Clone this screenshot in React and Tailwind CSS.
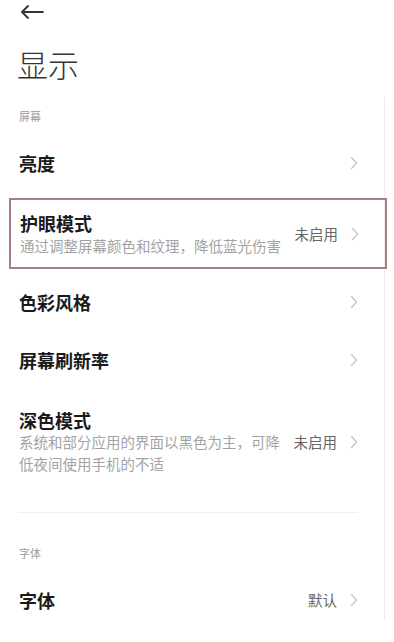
import React from "react";

const FONT = { fontFamily: '"Noto Sans CJK SC", "Noto Sans", sans-serif' };

const Chevron = () => (
  <svg width="8" height="14" viewBox="0 0 8 14" fill="none" className="shrink-0">
    <polyline points="1.5,1.5 6.5,7 1.5,12.5" stroke="#c4c4c4" strokeWidth="1.3" strokeLinecap="round" strokeLinejoin="round" />
  </svg>
);

const SectionLabel = ({ children, className = "" }) => (
  <div className={`pl-[19px] text-[11px] leading-[14px] text-[#9a9a9a] ${className}`}>{children}</div>
);

const Row = ({ title, value }) => (
  <div className="h-[58px] flex items-center pl-[19px] pr-[26px]">
    <div className="flex-1 text-[18px] font-bold text-[#1a1a1a]">{title}</div>
    {value && <span className="text-[14.5px] text-[#666] mr-[13px]">{value}</span>}
    <Chevron />
  </div>
);

export default function App() {
  return (
    <div className="w-[394px] h-[642px] bg-white overflow-hidden" style={FONT}>
      {/* back arrow */}
      <div className="h-[20px] pl-[20px] pt-[3px] flex items-center">
        <svg width="24" height="14" viewBox="0 0 24 14" fill="none">
          <path d="M23 7H2M8 1L2 7l6 6" stroke="#333" strokeWidth="1.8" strokeLinecap="round" strokeLinejoin="round" />
        </svg>
      </div>

      {/* page title */}
      <h1 className="pl-[17px] mt-[24px] text-[31px] leading-[40px] font-light text-[#333]">显示</h1>

      {/* list with scrollbar line */}
      <div className="mt-[13px] w-[385px] h-[523px] border-r border-[#ebebeb]">
        <SectionLabel className="pt-[12px]">屏幕</SectionLabel>
        <div className="mt-[11px]">
          <Row title="亮度" />
        </div>

        {/* highlighted item */}
        <div className="mt-[6px] ml-[9px] -mr-[3px] h-[71px] border-2 border-[#a88080] flex items-center pl-[9px] pr-[26px]">
          <div className="flex-1">
            <div className="text-[18px] leading-[24px] font-bold text-[#1a1a1a]">护眼模式</div>
            <div className="text-[14.5px] leading-[22px] text-[#a3a3a3]">通过调整屏幕颜色和纹理，降低蓝光伤害</div>
          </div>
          <span className="text-[14.5px] text-[#666] mr-[13px]">未启用</span>
          <Chevron />
        </div>

        <div className="mt-[4px]">
          <Row title="色彩风格" />
          <Row title="屏幕刷新率" />
        </div>

        {/* dark mode */}
        <div className="pt-[20px] pl-[19px] pr-[26px] flex items-center">
          <div className="flex-1">
            <div className="text-[18px] leading-[22px] font-bold text-[#1a1a1a]">深色模式</div>
            <div className="w-[266px] text-[14.5px] leading-[22px] text-[#a3a3a3]">系统和部分应用的界面以黑色为主，可降低夜间使用手机的不适</div>
          </div>
          <span className="text-[14.5px] text-[#666] mr-[13px]">未启用</span>
          <Chevron />
        </div>

        <div className="mt-[37px] ml-[18px] w-[340px] h-px bg-[#efefef]" />

        <SectionLabel className="mt-[33px]">字体</SectionLabel>
        <div className="mt-[11px]">
          <Row title="字体" value="默认" />
        </div>
      </div>
    </div>
  );
}
